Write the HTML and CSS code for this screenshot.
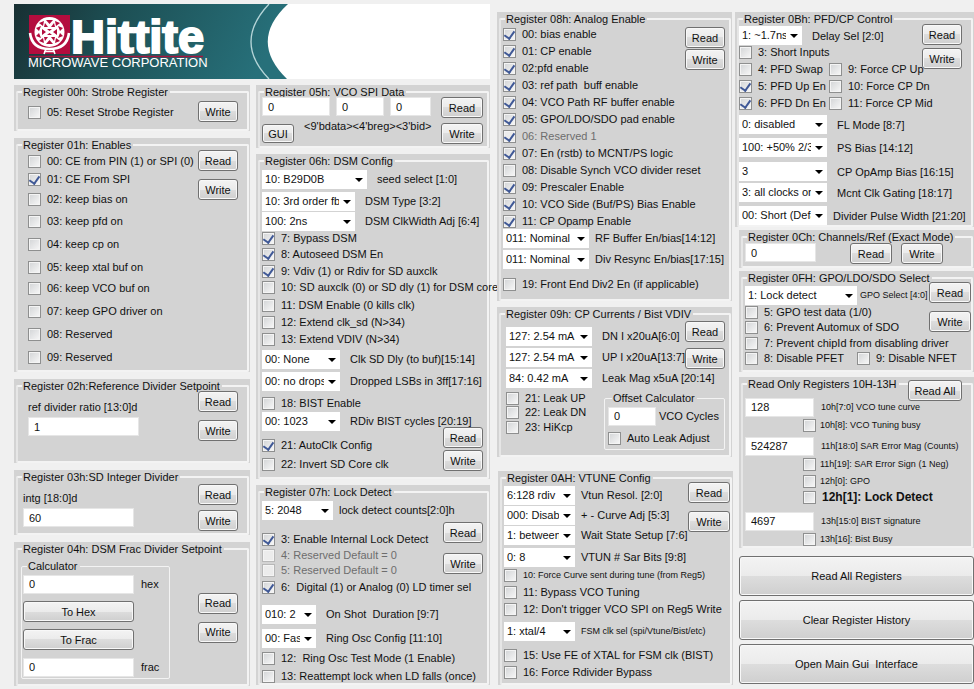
FILE: index.html
```html
<!DOCTYPE html>
<html lang="en">
<head>
<meta charset="utf-8">
<title>Hittite Register Control</title>
<link rel="stylesheet" href="styles.css">
</head>
<body>
<main class="app">
  <div class="left">
    <header class="banner">
      <svg class="banner-art" viewBox="0 0 476 75" preserveAspectRatio="xMinYMin slice" role="img" aria-label="Hittite Microwave Corporation">
        <defs>
          <linearGradient id="sea" x1="0" y1="0" x2="1" y2="0.15">
            <stop offset="0" stop-color="#182f32"/>
            <stop offset="0.4" stop-color="#1d5055"/>
            <stop offset="1" stop-color="#27707a"/>
          </linearGradient>
        </defs>
        <rect width="476" height="75" fill="#fff"/>
        <path d="M0 0H274Q234 37 273 75H0Z" fill="url(#sea)"/>
        <path d="M255 0Q219 38 255 75" fill="none" stroke="#b5d5d8" stroke-width="1.3"/>
        <rect x="15" y="11" width="41" height="39" fill="#b30d3e"/>
        <circle cx="35.500" cy="28" r="15" fill="#fff"/>
        <path d="M16 29Q18 45 35.500 45Q53 45 55 29" fill="none" stroke="#fff" stroke-width="2.600"/>
        <g fill="#b30d3e">
          <path d="M32 16H39L35.500 20ZM25 19L30 17L29 22ZM46 19L41 17L42 22ZM31 19L34 23H30ZM40 19L37 23H41Z"/>
          <path d="M22 24L27 22L25 27ZM49 24L44 22L46 27ZM22 32L27 34L25 29ZM49 32L44 34L46 29Z"/>
          <path d="M28 25L32 28L28 31ZM43 25L39 28L43 31ZM33 25H38L35.500 27ZM33 31H38L35.500 29Z"/>
          <path d="M32 40H39L35.500 36ZM25 37L30 39L29 34ZM46 37L41 39L42 34ZM31 37L34 33H30ZM40 37L37 33H41Z"/>
        </g>
        <path d="M32 45L30 50M39 45L41 50M30 47.500H41" fill="none" stroke="#fff" stroke-width="1.600"/>
        <text class="logo-name" x="57" y="49">Hittite</text>
        <path d="M15 52.500H189" stroke="#a4163f" stroke-width="1.500"/>
        <text class="logo-sub" x="14" y="63">MICROWAVE CORPORATION</text>
      </svg>
    </header>

    <div class="col col-a">
      <section class="panel"><fieldset><legend>Register 00h: Strobe Register</legend>
        <div class="body">
          <div class="rows wide"><label class="check t6"><input type="checkbox">05: Reset Strobe Register</label></div>
          <div class="tools far t2"><button>Write</button></div>
        </div>
      </fieldset></section>

      <section class="panel"><fieldset><legend>Register 01h: Enables</legend>
        <div class="body">
          <div class="rows wide">
            <label class="check t2"><input type="checkbox">00: CE from PIN (1) or SPI (0)</label>
            <label class="check t4"><input type="checkbox" checked>01: CE From SPI</label>
            <label class="check t6"><input type="checkbox">02: keep bias on</label>
            <label class="check t8"><input type="checkbox">03: keep pfd on</label>
            <label class="check t9"><input type="checkbox">04: keep cp on</label>
            <label class="check t9"><input type="checkbox">05: keep xtal buf on</label>
            <label class="check t7"><input type="checkbox">06: keep VCO buf on</label>
            <label class="check t9"><input type="checkbox">07: keep GPO driver on</label>
            <label class="check t9"><input type="checkbox">08: Reserved</label>
            <label class="check t9"><input type="checkbox">09: Reserved</label>
          </div>
          <div class="tools far gap8 raised"><button>Read</button><button>Write</button></div>
        </div>
      </fieldset></section>

      <section class="panel"><fieldset><legend>Register 02h:Reference Divider Setpoint</legend>
        <div class="body">
          <div class="rows wide">
            <label class="stack t7">ref divider ratio [13:0]d<input class="w111" type="text" value="1"></label>
          </div>
          <div class="tools far gap8 raised"><button>Read</button><button>Write</button></div>
        </div>
      </fieldset></section>

      <section class="panel"><fieldset><legend>Register 03h:SD Integer Divider</legend>
        <div class="body">
          <div class="rows mid">
            <label class="stack t7">intg [18:0]d<input class="w111" type="text" value="60"></label>
          </div>
          <div class="tools far gap5"><button>Read</button><button>Write</button></div>
        </div>
      </fieldset></section>

      <section class="panel"><fieldset><legend>Register 04h: DSM Frac Divider Setpoint</legend>
        <div class="body">
          <div class="rows mid">
            <fieldset class="inner calc t3"><legend>Calculator</legend>
              <label class="field"><input class="w111" type="text" value="0">hex</label>
              <button class="bar">To Hex</button>
              <button class="bar">To Frac</button>
              <label class="field"><input class="w111" type="text" value="0">frac</label>
            </fieldset>
          </div>
          <div class="tools far gap8 middle"><button>Read</button><button>Write</button></div>
        </div>
      </fieldset></section>
    </div>

    <div class="col col-b">
      <section class="panel"><fieldset><legend>Register 05h: VCO SPI Data</legend>
        <div class="body raised">
          <div class="rows">
            <div class="trio">
              <input class="w68" type="text" value="0" aria-label="9 bit data">
              <input class="w48" type="text" value="0" aria-label="4 bit register">
              <input class="w41" type="text" value="0" aria-label="3 bit id">
            </div>
            <div class="hint t3"><button class="gui">GUI</button><span>&lt;9'bdata&gt;&lt;4'breg&gt;&lt;3'bid&gt;</span></div>
          </div>
          <div class="tools gap5 large"><button>Read</button><button>Write</button></div>
        </div>
      </fieldset></section>

      <section class="panel"><fieldset><legend>Register 06h: DSM Config</legend>
        <div class="body">
          <div class="rows">
            <label class="pick t1"><span class="drop w105"><select><option>10: B29D0B</option></select></span>seed select [1:0]</label>
            <label class="pick t2"><span class="drop w93"><select><option>10: 3rd order fb</option></select></span>DSM Type [3:2]</label>
            <label class="pick"><span class="drop w93"><select><option>100: 2ns</option></select></span>DSM ClkWidth Adj [6:4]</label>
            <label class="check"><input type="checkbox" checked>7: Bypass DSM</label>
            <label class="check t2"><input type="checkbox" checked>8: Autoseed DSM En</label>
            <label class="check t3"><input type="checkbox" checked>9: Vdiv (1) or Rdiv for SD auxclk</label>
            <label class="check t2"><input type="checkbox">10: SD auxclk (0) or SD dly (1) for DSM core</label>
            <label class="check t4"><input type="checkbox">11: DSM Enable (0 kills clk)</label>
            <label class="check t3"><input type="checkbox">12: Extend clk_sd (N&gt;34)</label>
            <label class="check t3"><input type="checkbox">13: Extend VDIV (N&gt;34)</label>
            <label class="pick t3"><span class="drop w78"><select><option>00: None</option></select></span>Clk SD Dly (to buf)[15:14]</label>
            <label class="pick t2"><span class="drop w78"><select><option>00: no drops</option></select></span>Dropped LSBs in 3ff[17:16]</label>
            <label class="check t5"><input type="checkbox">18: BIST Enable</label>
            <label class="pick t1"><span class="drop w78"><select><option>00: 1023</option></select></span>RDiv BIST cycles [20:19]</label>
            <label class="check t7"><input type="checkbox" checked>21: AutoClk Config</label>
            <label class="check t5"><input type="checkbox">22: Invert SD Core clk</label>
          </div>
          <div class="tools gap2 bottom"><button>Read</button><button>Write</button></div>
        </div>
      </fieldset></section>

      <section class="panel"><fieldset><legend>Register 07h: Lock Detect</legend>
        <div class="body">
          <div class="rows">
            <label class="pick near t1"><span class="drop w71"><select><option>5: 2048</option></select></span>lock detect counts[2:0]h</label>
            <label class="check t12"><input type="checkbox" checked>3: Enable Internal Lock Detect</label>
            <label class="check off t2"><input type="checkbox" disabled>4: Reserved Default = 0</label>
            <label class="check off t1"><input type="checkbox" disabled>5: Reserved Default = 0</label>
            <label class="check t3"><input type="checkbox" checked>6: &nbsp;Digital (1) or Analog (0) LD timer sel</label>
            <label class="pick t10"><span class="drop w54"><select><option>010: 2</option></select></span>On Shot &nbsp;Duration [9:7]</label>
            <label class="pick t4"><span class="drop w54"><select><option>00: Fast</option></select></span>Ring Osc Config [11:10]</label>
            <label class="check t3"><input type="checkbox">12: &nbsp;Ring Osc Test Mode (1 Enable)</label>
            <label class="check t4"><input type="checkbox">13: Reattempt lock when LD falls (once)</label>
          </div>
          <div class="tools gap10 lowered"><button>Read</button><button>Write</button></div>
        </div>
      </fieldset></section>
    </div>
  </div>

  <div class="col col-c">
    <section class="panel"><fieldset><legend>Register 08h: Analog Enable</legend>
      <div class="body">
        <div class="rows">
          <label class="check t1"><input type="checkbox" checked>00: bias enable</label>
          <label class="check t3"><input type="checkbox" checked>01: CP enable</label>
          <label class="check t3"><input type="checkbox" checked>02:pfd enable</label>
          <label class="check t3"><input type="checkbox" checked>03: ref path &nbsp;buff enable</label>
          <label class="check t3"><input type="checkbox" checked>04: VCO Path RF buffer enable</label>
          <label class="check t3"><input type="checkbox" checked>05: GPO/LDO/SDO pad enable</label>
          <label class="check off t3"><input type="checkbox" checked disabled>06: Reserved 1</label>
          <label class="check t3"><input type="checkbox" checked>07: En (rstb) to MCNT/PS logic</label>
          <label class="check t3"><input type="checkbox">08: Disable Synch VCO divider reset</label>
          <label class="check t3"><input type="checkbox" checked>09: Prescaler Enable</label>
          <label class="check t3"><input type="checkbox" checked>10: VCO Side (Buf/PS) Bias Enable</label>
          <label class="check t3"><input type="checkbox" checked>11: CP Opamp Enable</label>
          <label class="pick near"><span class="drop w86"><select><option>011: Nominal</option></select></span>RF Buffer En/bias[14:12]</label>
          <label class="pick near t1"><span class="drop w86"><select><option>011: Nominal</option></select></span>Div Resync En/bias[17:15]</label>
          <label class="check t8"><input type="checkbox">19: Front End Div2 En (if applicable)</label>
        </div>
        <div class="tools gap1 t1"><button>Read</button><button>Write</button></div>
      </div>
    </fieldset></section>

    <section class="panel"><fieldset><legend>Register 09h: CP Currents / Bist VDIV</legend>
      <div class="body">
        <div class="rows mid">
          <label class="pick t5"><span class="drop w86"><select><option>127: 2.54 mA</option></select></span>DN I x20uA[6:0]</label>
          <label class="pick t1"><span class="drop w86"><select><option>127: 2.54 mA</option></select></span>UP I x20uA[13:7]</label>
          <label class="pick t1"><span class="drop w86"><select><option>84: 0.42 mA</option></select></span>Leak Mag x5uA [20:14]</label>
          <div class="split">
            <div class="rows flush">
              <label class="check t3"><input type="checkbox">21: Leak UP</label>
              <label class="check"><input type="checkbox">22: Leak DN</label>
              <label class="check t1"><input type="checkbox">23: HiKcp</label>
            </div>
            <fieldset class="inner offset t3"><legend>Offset Calculator</legend>
              <label class="field"><input class="w48" type="text" value="0">VCO Cycles</label>
              <label class="check t5"><input type="checkbox">Auto Leak Adjust</label>
            </fieldset>
          </div>
        </div>
        <div class="tools gap6"><button>Read</button><button>Write</button></div>
      </div>
    </fieldset></section>

    <section class="panel"><fieldset><legend>Register 0AH: VTUNE Config</legend>
      <div class="body">
        <div class="rows">
          <label class="pick near"><span class="drop w71"><select><option>6:128 rdiv</option></select></span>Vtun Resol. [2:0]</label>
          <label class="pick near"><span class="drop w71"><select><option>000: Disabled</option></select></span>+ - Curve Adj [5:3]</label>
          <label class="pick near"><span class="drop w71"><select><option>1: between</option></select></span>Wait State Setup [7:6]</label>
          <label class="pick near t2"><span class="drop w71"><select><option>0: 8</option></select></span>VTUN # Sar Bits [9:8]</label>
          <label class="check small t1"><input type="checkbox">10: Force Curve sent during tune (from Reg5)</label>
          <label class="check t3"><input type="checkbox">11: Bypass VCO Tuning</label>
          <label class="check t3"><input type="checkbox">12: Don't trigger VCO SPI on Reg5 Write</label>
          <label class="pick near small t5"><span class="drop w71"><select><option>1: xtal/4</option></select></span>FSM clk sel (spi/Vtune/Bist/etc)</label>
          <label class="check t7"><input type="checkbox">15: Use FE of XTAL for FSM clk (BIST)</label>
          <label class="check t3"><input type="checkbox">16: Force Rdivider Bypass</label>
        </div>
        <div class="tools gap8 large edge"><button>Read</button><button>Write</button></div>
      </div>
    </fieldset></section>
  </div>

  <div class="col col-d">
    <section class="panel wider"><fieldset><legend>Register 0Bh: PFD/CP Control</legend>
      <div class="body">
        <div class="rows slim">
          <label class="pick"><span class="drop w63"><select><option>1: ~1.7ns</option></select></span>Delay Sel [2:0]</label>
          <div class="pairs">
            <label class="check"><input type="checkbox">3: Short Inputs</label><span></span>
            <label class="check"><input type="checkbox">4: PFD Swap</label><label class="check"><input type="checkbox">9: Force CP Up</label>
            <label class="check"><input type="checkbox" checked>5: PFD Up En</label><label class="check"><input type="checkbox">10: Force CP Dn</label>
            <label class="check"><input type="checkbox" checked>6: PFD Dn En</label><label class="check"><input type="checkbox">11: Force CP Mid</label>
          </div>
          <label class="pick t5"><span class="drop w88"><select><option>0: disabled</option></select></span>FL Mode [8:7]</label>
          <label class="pick t4"><span class="drop w88"><select><option>100: +50% 2/3</option></select></span>PS Bias [14:12]</label>
          <label class="pick t5"><span class="drop w88"><select><option>3</option></select></span>CP OpAmp Bias [16:15]</label>
          <label class="pick t2"><span class="drop w88"><select><option>3: all clocks on</option></select></span>Mcnt Clk Gating [18:17]</label>
          <label class="pick near t4"><span class="drop w88"><select><option>00: Short (Default)</option></select></span>Divider Pulse Width [21:20]</label>
        </div>
        <div class="tools gap3 far raised"><button>Read</button><button>Write</button></div>
      </div>
    </fieldset></section>

    <section class="panel"><fieldset><legend>Register 0Ch: Channels/Ref (Exact Mode)</legend>
      <div class="channels">
        <input class="w71" type="text" value="0" aria-label="Channels per reference">
        <div class="duo"><button>Read</button><button>Write</button></div>
      </div>
    </fieldset></section>

    <section class="panel"><fieldset><legend>Register 0FH: GPO/LDO/SDO Select</legend>
      <div class="body">
        <div class="rows">
          <label class="pick tight small"><span class="drop w112"><select><option>1: Lock detect</option></select></span>GPO Select [4:0]</label>
          <label class="check"><input type="checkbox">5: GPO test data (1/0)</label>
          <label class="check t1"><input type="checkbox">6: Prevent Automux of SDO</label>
          <label class="check t2"><input type="checkbox">7: Prevent chipId from disabling driver</label>
          <div class="fets t1"><label class="check"><input type="checkbox">8: Disable PFET</label><label class="check"><input type="checkbox">9: Disable NFET</label></div>
        </div>
        <div class="tools gap8 large edge"><button>Read</button><button>Write</button></div>
      </div>
    </fieldset></section>

    <section class="panel readonly"><fieldset><legend>Read Only Registers 10H-13H</legend>
      <div class="rows">
        <label class="field small t6"><input class="w69" type="text" value="128">10h[7:0] VCO tune curve</label>
        <label class="check inset small t1"><input type="checkbox">10h[8]: VCO Tuning busy</label>
        <label class="field small t4"><input class="w69" type="text" value="524287">11h[18:0] SAR Error Mag (Counts)</label>
        <label class="check inset small t1"><input type="checkbox">11h[19]: SAR Error Sign (1 Neg)</label>
        <label class="check inset small t3"><input type="checkbox">12h[0]: GPO</label>
        <label class="check inset strong t2"><input type="checkbox">12h[1]: Lock Detect</label>
        <label class="field small t7"><input class="w69" type="text" value="4697">13h[15:0] BIST signature</label>
        <label class="check inset small t1"><input type="checkbox">13h[16]: Bist Busy</label>
      </div>
    </fieldset><button class="read-all">Read All</button></section>

    <div class="actions">
      <button>Read All Registers</button>
      <button>Clear Register History</button>
      <button>Open Main Gui &nbsp;Interface</button>
    </div>
  </div>
</main>
</body>
</html>
```
FILE: styles.css
```css
* { box-sizing: border-box; }

body {
  margin: 0;
  background: #f0f0f0;
  color: #111;
  font: 11px/14px "Liberation Sans", sans-serif;
}

.app {
  display: grid;
  grid-template-columns: 476fr 235fr 235fr;
  column-gap: 7px;
  align-items: start;
  padding: 4px 0 0 14px;
}
.app > :last-child { margin-left: -4px; }

.left {
  display: grid;
  grid-template-columns: 236fr 234fr;
  gap: 6px;
}
.banner {
  grid-column: 1 / -1;
  height: 75px;
  background: #fff;
}
.banner-art { display: block; width: 100%; height: 75px; }
.logo-name {
  font: bold 47px "Liberation Sans", sans-serif;
  fill: #fff;
  stroke: #fff;
  stroke-width: 2px;
}
.logo-sub { font: 13px "Liberation Sans", sans-serif; fill: #fff; }

/* Columns of register panels */
.col { display: grid; min-width: 0; align-content: start; }
.col-a { grid-template-rows: minmax(46px, auto) minmax(234px, auto) minmax(84px, auto) minmax(65px, auto) minmax(144px, auto); row-gap: 7px; }
.col-b { grid-template-rows: minmax(63px, auto) minmax(325px, auto) minmax(200px, auto); row-gap: 6px; }
.col-c { grid-template-rows: minmax(289px, auto) minmax(150px, auto) minmax(222px, auto); row-gap: 6px; padding-top: 8px; }
.col-c > :last-child { margin: 8px -1px 0 1px; }
.col-d { grid-template-rows: minmax(215px, auto) minmax(38px, auto) minmax(101px, auto) minmax(172px, auto) auto; row-gap: 3px; padding-top: 8px; }
.col-d > :not(.wider) { margin-left: 4px; }

.panel { display: grid; min-width: 0; background: #d3d3d3; }
fieldset {
  min-width: 0;
  margin: 0 1px 0 2px;
  padding: 0;
  border: 2px solid #f3f3f3;
  border-left-color: #e6e6e6;
  border-radius: 2px;
}
legend { margin-left: 4px; padding: 0 2px 0 1px; height: 14px; white-space: nowrap; }

.body { display: grid; grid-template-columns: minmax(0, 1fr) auto; align-items: start; }
.rows { display: flex; flex-direction: column; min-width: 0; padding-left: 2px; white-space: nowrap; }
.rows.wide { padding-left: 10px; }
.rows.mid { padding-left: 5px; }
.rows.slim { padding-left: 0; }
.rows.flush { padding-left: 0; }
.slim .pick { height: 19px; }

/* Vertical spacing steps */
.t1 { margin-top: 1px; }
.t2 { margin-top: 2px; }
.t3 { margin-top: 3px; }
.t4 { margin-top: 4px; }
.t5 { margin-top: 5px; }
.t6 { margin-top: 6px; }
.t7 { margin-top: 7px; }
.t8 { margin-top: 8px; }
.t9 { margin-top: 9px; }
.t10 { margin-top: 10px; }
.t12 { margin-top: 12px; }
.raised { margin-top: -2px; }

.gap1 { row-gap: 1px; }
.gap2 { row-gap: 2px; }
.gap3 { row-gap: 3px; }
.gap5 { row-gap: 5px; }
.gap6 { row-gap: 6px; }
.gap8 { row-gap: 8px; }
.gap10 { row-gap: 10px; }

/* Check boxes */
.check { display: flex; align-items: center; gap: 6px; height: 14px; }
.check input {
  appearance: none;
  display: grid;
  place-items: center;
  flex: none;
  width: 13px;
  height: 13px;
  margin: 0;
  border: 1px solid #8e8f8f;
  background: linear-gradient(135deg, #d2d4d6, #f8f8f8);
  box-shadow: inset 0 0 0 1px #f4f4f4;
}
.check input:checked::before {
  content: "";
  width: 5px;
  height: 8px;
  margin-bottom: 3px;
  border: solid #3f5896;
  border-width: 0 2px 2px 0;
  transform: rotate(35deg);
}
.check input:disabled { border-color: #b8b8b8; background: #ececec; }
.check input:checked:disabled { border-color: #8e8f8f; }
.off { color: #6d6d6d; }
.inset { padding-left: 58px; gap: 4px; }
.small { font: 9px/14px "Liberation Sans", sans-serif; }
.strong { font: bold 12px/14px "Liberation Sans", sans-serif; gap: 6px; }

/* Drop-downs */
.pick { display: flex; align-items: center; gap: 10px; height: 20px; }
.pick.near { gap: 6px; }
.pick.tight { gap: 3px; }
.drop { position: relative; flex: none; height: 19px; }
.drop::after {
  content: "";
  position: absolute;
  right: 4px;
  top: 8px;
  border: solid transparent;
  border-width: 4px 4px 0;
  border-top-color: #000;
  pointer-events: none;
}
select {
  appearance: none;
  display: block;
  width: 100%;
  height: 19px;
  padding: 0 16px 0 3px;
  border: 0;
  border-radius: 0;
  background: #fff;
  color: #111;
  font: 11px/19px "Liberation Sans", sans-serif;
}

/* Text boxes */
input[type="text"] {
  flex: none;
  height: 19px;
  padding: 0 5px;
  border: 1px solid #e6e6e6;
  background: #fff;
  color: #111;
  font: 11px/17px "Liberation Sans", sans-serif;
}
.field { display: flex; align-items: center; gap: 7px; height: 20px; }
.stack { display: flex; flex-direction: column; align-items: flex-start; gap: 3px; }
.trio { display: flex; gap: 6px; }
.hint { display: flex; gap: 10px; align-items: flex-start; }

.w41 { width: 41px; }
.w48 { width: 48px; }
.w54 { width: 54px; }
.w63 { width: 63px; }
.w68 { width: 68px; }
.w69 { width: 69px; }
.w71 { width: 71px; }
.w78 { width: 78px; }
.w86 { width: 86px; }
.w88 { width: 88px; }
.w93 { width: 93px; }
.w105 { width: 105px; }
.w111 { width: 111px; }
.w112 { width: 112px; }

/* Buttons */
button {
  width: 40px;
  height: 21px;
  padding: 0;
  border: 1px solid #707070;
  border-radius: 3px;
  background: linear-gradient(#f3f3f3, #ebebeb 50%, #dddddd 50%, #cfcfcf);
  box-shadow: inset 0 0 0 1px #f8f8f8;
  color: #111;
  font: 11px/14px "Liberation Sans", sans-serif;
}
.tools { display: flex; flex-direction: column; padding-right: 4px; z-index: 1; }
.tools.far { padding-right: 9px; }
.tools.edge { padding-right: 0; margin-top: -3px; }
.tools.large button { width: 42px; }
.tools.middle { align-self: center; }
.tools.bottom { align-self: end; }
.tools.lowered { margin-top: 23px; }
.gui { width: 32px; height: 19px; margin-top: 5px; }
.bar { width: 111px; }

.inner { border-width: 1px; border-color: #f3f3f3; margin-inline: 0; margin-bottom: 0; }
.calc { display: grid; width: 149px; margin-left: -2px; padding: 1px; row-gap: 7px; }
.offset { width: 121px; padding: 1px 3px 4px; }
.offset .field { gap: 3px; }
.split { display: grid; grid-template-columns: 98px auto; justify-content: start; align-items: start; }

.pairs { display: grid; grid-template-columns: 90px auto; row-gap: 3px; }
.fets { display: grid; grid-template-columns: 112px auto; }
.channels { display: flex; gap: 34px; padding-left: 2px; margin-top: -1px; }
.duo { display: flex; gap: 9px; }
.duo button { width: 42px; }

.readonly { position: relative; margin-top: 2px; }
.read-all { position: absolute; top: 3px; right: 12px; width: 54px; }

.actions { display: grid; row-gap: 4px; margin-top: 5px; }
.actions button { width: 100%; height: 40px; }
```
